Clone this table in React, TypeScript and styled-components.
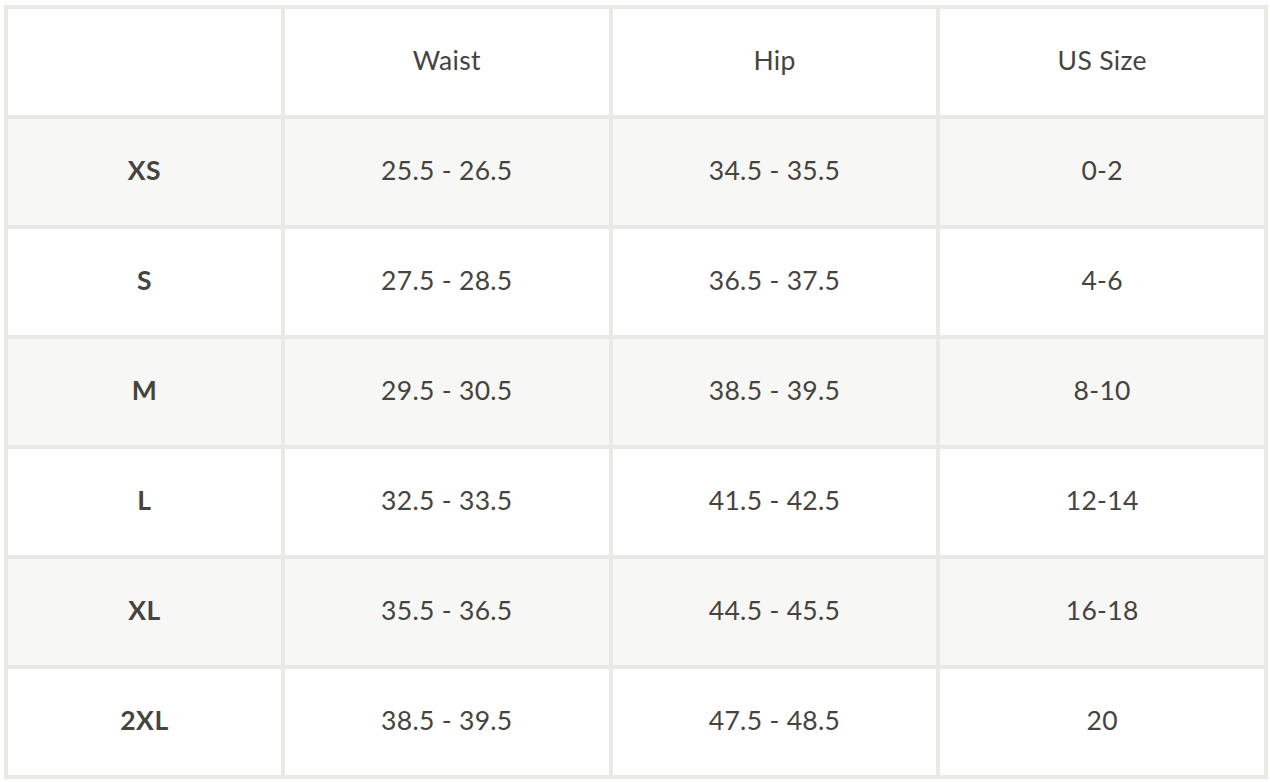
import React from 'react'
import styled, { createGlobalStyle } from 'styled-components'

const GlobalStyle = createGlobalStyle`
  html, body {
    margin: 0;
    padding: 0;
    background: #ffffff;
  }
  body {
    font-family: Lato, 'Liberation Sans', sans-serif;
  }
`

const Page = styled.div`
  padding: 5px 2px 0 4px;
`

const Table = styled.div`
  display: grid;
  grid-template-columns: 273px 1fr 1fr 1fr;
  grid-auto-rows: 106px;
  gap: 4px;
  padding: 4px;
  width: 1264px;
  box-sizing: border-box;
  background: #ebe9e6;
`

const Cell = styled.div<{ $shaded?: boolean; $label?: boolean }>`
  display: flex;
  align-items: center;
  justify-content: center;
  padding-bottom: 4px;
  box-sizing: border-box;
  background: ${props => (props.$shaded ? '#f7f7f5' : '#ffffff')};
  color: #46443e;
  font-size: 26.5px;
  font-weight: ${props => (props.$label ? 700 : 400)};
  letter-spacing: ${props => (props.$label ? '0.6px' : '0.3px')};
`

const headers = ['', 'Waist', 'Hip', 'US Size']

const rows = [
  ['XS', '25.5 - 26.5', '34.5 - 35.5', '0-2'],
  ['S', '27.5 - 28.5', '36.5 - 37.5', '4-6'],
  ['M', '29.5 - 30.5', '38.5 - 39.5', '8-10'],
  ['L', '32.5 - 33.5', '41.5 - 42.5', '12-14'],
  ['XL', '35.5 - 36.5', '44.5 - 45.5', '16-18'],
  ['2XL', '38.5 - 39.5', '47.5 - 48.5', '20']
]

const App: React.FC = () => {
  return (
    <Page>
      <GlobalStyle />
      <Table>
        {headers.map((h, i) => (
          <Cell key={'h' + i}>{h}</Cell>
        ))}
        {rows.map((row, r) =>
          row.map((value, c) => (
            <Cell key={r + '-' + c} $shaded={r % 2 === 0} $label={c === 0}>
              {value}
            </Cell>
          ))
        )}
      </Table>
    </Page>
  )
}

export default App
